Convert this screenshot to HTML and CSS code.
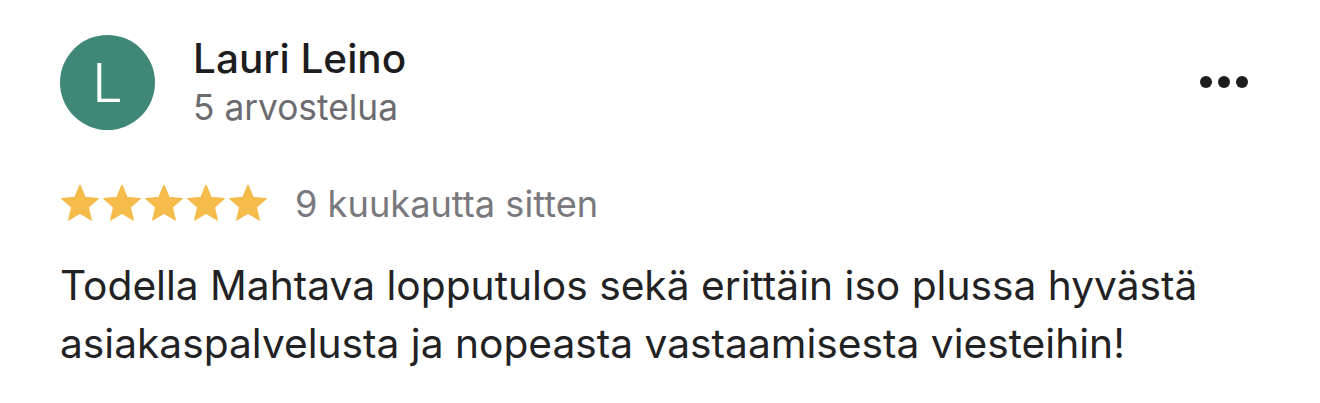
FILE: index.html
```html
<!DOCTYPE html>
<html lang="fi">

<head>
    <meta charset="UTF-8">
    <meta name="viewport" content="width=device-width, initial-scale=1.0">
    <title>Arvostelu</title>
    <link rel="stylesheet" href="styles.css">
</head>

<body>

    <div class="review">
        <div class="review-header">
            <div class="avatar">L</div>
            <div class="author">
                <div class="author-name">Lauri Leino</div>
                <div class="author-meta">5 arvostelua</div>
            </div>
            <!-- Valikko -->
            <button class="more" aria-label="Lisää">
                <span class="dot"></span>
                <span class="dot"></span>
                <span class="dot"></span>
            </button>
        </div>

        <div class="review-rating">
            <div class="stars">
                <svg class="star" viewBox="0 0 24 24"><path d="M12 1.4L15.06 8.69 22.94 9.35 16.95 14.51 18.76 22.2 12 18.1 5.24 22.2 7.05 14.51 1.06 9.35 8.94 8.69Z"/></svg>
                <svg class="star" viewBox="0 0 24 24"><path d="M12 1.4L15.06 8.69 22.94 9.35 16.95 14.51 18.76 22.2 12 18.1 5.24 22.2 7.05 14.51 1.06 9.35 8.94 8.69Z"/></svg>
                <svg class="star" viewBox="0 0 24 24"><path d="M12 1.4L15.06 8.69 22.94 9.35 16.95 14.51 18.76 22.2 12 18.1 5.24 22.2 7.05 14.51 1.06 9.35 8.94 8.69Z"/></svg>
                <svg class="star" viewBox="0 0 24 24"><path d="M12 1.4L15.06 8.69 22.94 9.35 16.95 14.51 18.76 22.2 12 18.1 5.24 22.2 7.05 14.51 1.06 9.35 8.94 8.69Z"/></svg>
                <svg class="star" viewBox="0 0 24 24"><path d="M12 1.4L15.06 8.69 22.94 9.35 16.95 14.51 18.76 22.2 12 18.1 5.24 22.2 7.05 14.51 1.06 9.35 8.94 8.69Z"/></svg>
            </div>
            <span class="review-date">9 kuukautta sitten</span>
        </div>

        <p class="review-text">Todella Mahtava lopputulos sekä erittäin iso plussa hyvästä asiakaspalvelusta ja nopeasta vastaamisesta viesteihin!</p>
    </div>

</body>

</html>
```

FILE: styles.css
```css
body {
    font-family: 'Inter', 'Roboto', sans-serif;
    background-color: #fff;
    margin: 0;
    padding: 0;
    color: #1d1d1f;
}

.review {
    padding: 35px 60px 0 60px;
}

.review-header {
    display: flex;
    align-items: flex-start;
}

.avatar {
    width: 95px;
    height: 95px;
    border-radius: 50%;
    background-color: #3f8878;
    color: #fff;
    font-size: 54px;
    font-weight: 300;
    display: flex;
    align-items: center;
    justify-content: center;
    flex-shrink: 0;
}

.author {
    margin-left: 38px;
    flex: 1;
}

.author-name {
    font-size: 40.5px;
    font-weight: 500;
    line-height: 48px;
}

.author-meta {
    font-size: 35.3px;
    color: #6c6c70;
    line-height: 50px;
}

.more {
    background: none;
    border: none;
    padding: 0;
    margin: 41px 12px 0 0;
    display: flex;
    gap: 6px;
    cursor: pointer;
}

.dot {
    width: 12px;
    height: 12px;
    border-radius: 50%;
    background-color: #1d1d1f;
}

.review-rating {
    display: flex;
    align-items: flex-start;
    margin-top: 50px;
}

.stars {
    display: flex;
    gap: 2px;
}

.star {
    width: 40px;
    height: 40px;
    fill: #f5bb4b;
    stroke: #f5bb4b;
    stroke-width: 0.8;
    stroke-linejoin: round;
}

.review-date {
    margin: 1px 0 0 27px;
    font-size: 36.2px;
    line-height: 40px;
    color: #78787d;
}

.review-text {
    margin: 33px 0 0 0;
    font-size: 40.7px;
    line-height: 58px;
    color: #222224;
}
```
